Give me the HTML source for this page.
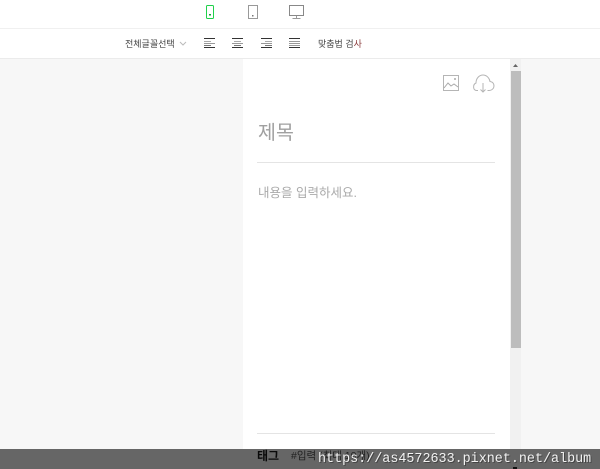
<!DOCTYPE html>
<html><head><meta charset="utf-8">
<style>
html,body{margin:0;padding:0;width:600px;height:469px;overflow:hidden;background:#fff}
body{position:relative;font-family:"Liberation Sans","Noto Sans CJK KR",sans-serif}
.a{position:absolute}
.t{position:absolute;white-space:nowrap}
</style></head>
<body>
<div class="a" style="left:0;top:28px;width:600px;height:1px;background:#f0f0f0"></div>
<div class="a" style="left:0;top:58px;width:600px;height:391px;background:#f7f7f7;border-top:1px solid #ebebeb;box-sizing:border-box"></div>
<div class="a" style="left:243px;top:59px;width:267px;height:390px;background:#fff"></div>
<div class="a" style="left:510px;top:59px;width:11px;height:390px;background:#f1f1f1"></div>
<div class="a" style="left:511px;top:71px;width:10px;height:277px;background:#bdbdbd"></div>

<svg class="a" style="left:0;top:0" width="600" height="110" fill="none">
  <!-- device icons -->
  <rect x="206.500" y="5.500" width="7" height="13" rx="1" stroke="#1fd14a"/>
  <rect x="209" y="14" width="2" height="1.500" fill="#10a838"/>
  <rect x="248.500" y="5.500" width="9" height="13" stroke="#999"/>
  <rect x="252" y="15" width="1.500" height="1.500" fill="#777"/>
  <rect x="289.500" y="5.500" width="14" height="10" stroke="#888"/>
  <path d="M296.500 16v2M292.500 18.500h8" stroke="#999"/>
  <!-- chevron -->
  <path d="M180 42l3 3 3-3" stroke="#bbb"/>
  <!-- align left -->
  <path d="M204 38.500h11M204 47.500h11" stroke="#333"/>
  <path d="M204 41.500h7" stroke="#aaa"/>
  <path d="M204 43.500h11" stroke="#999"/>
  <path d="M204 45.500h7" stroke="#777"/>
  <!-- align center -->
  <path d="M232 38.500h11M232 47.500h11" stroke="#333"/>
  <path d="M234 41.500h7" stroke="#aaa"/>
  <path d="M232 43.500h11" stroke="#999"/>
  <path d="M234 45.500h7" stroke="#777"/>
  <!-- align right -->
  <path d="M261 38.500h11M261 47.500h11" stroke="#333"/>
  <path d="M265 41.500h7" stroke="#aaa"/>
  <path d="M261 43.500h11" stroke="#999"/>
  <path d="M265 45.500h7" stroke="#777"/>
  <!-- justify -->
  <path d="M289 38.500h11M289 47.500h11" stroke="#333"/>
  <path d="M289 41.500h11M289 43.500h11M289 45.500h11" stroke="#999"/>
  <!-- image icon -->
  <rect x="443.500" y="75.500" width="15" height="15" stroke="#b5b5b5"/>
  <path d="M444 88l4-5 3 3 3-2 4 3" stroke="#aaa"/>
  <circle cx="455" cy="79" r="1" fill="#aaa"/>
  <!-- cloud icon -->
  <path d="M478 90.500h-1.500c-3.500 0-4-6-.5-7.500 0-5 3.500-8 7-8 3.500 0 6.500 3 7 6.500 4 .5 4.500 4 3.500 6.500-1 1.500-2 2.500-4.500 2.500h-1.500" stroke="#b5b5b5"/>
  <path d="M483 83v9M480.500 89.500l2.500 2.500 2.500-2.500" stroke="#b5b5b5"/>
  <!-- scroll arrow -->
  <path d="M513 67h5l-2.500-3z" fill="#666"/>
</svg>

<div class="t" style="left:125px;top:38px;font-size:9px;line-height:12px;color:#444">전체글꼴선택</div>
<div class="t" style="left:318px;top:38px;font-size:9px;line-height:12px;color:#444">맞춤법 검<span style="color:#8a3a3a">사</span></div>

<div class="t" style="left:258px;top:121px;font-size:19.500px;line-height:24px;color:#a0a0a0">제목</div>
<div class="a" style="left:257px;top:162px;width:238px;height:1px;background:#e4e4e4"></div>
<div class="t" style="left:258px;top:185px;font-size:12.500px;line-height:16px;color:#aaa">내용을 입력하세요.</div>
<div class="a" style="left:257px;top:433px;width:238px;height:1px;background:#e4e4e4"></div>

<div class="a" style="left:0;top:449px;width:600px;height:20px;background:#666"></div>
<div class="t" style="left:257px;top:449px;font-size:12px;line-height:15px;font-weight:bold;color:#0a0a0a">태그</div>
<div class="t" style="left:291px;top:449px;font-size:10.500px;line-height:14px;color:#222">#입력 (최대 10개)</div>
<div class="t" style="left:318px;top:451px;font-family:'Liberation Mono',monospace;font-size:13.400px;line-height:17px;color:#f2f2f2;text-shadow:1px 1px 0 #444">https://as4572633.pixnet.net/album</div>
<div class="a" style="left:513px;top:467px;width:4px;height:2px;background:#111"></div>
</body></html>
